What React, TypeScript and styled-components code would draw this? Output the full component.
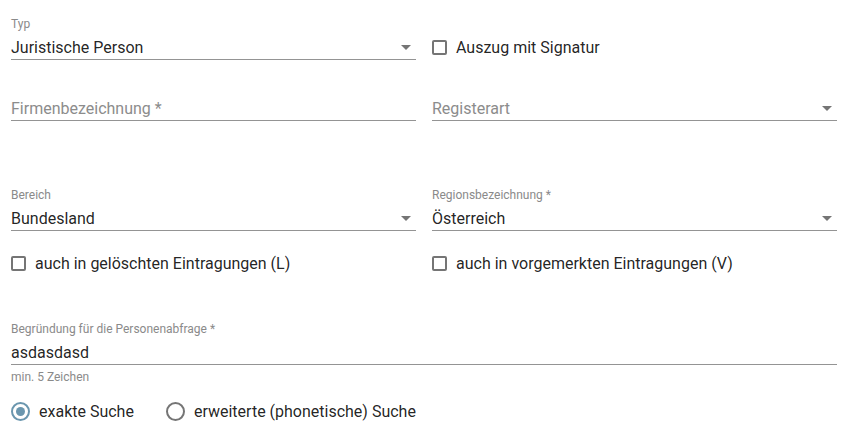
import React from "react";
import styled, { createGlobalStyle } from "styled-components";

const Global = createGlobalStyle`
  html, body { margin: 0; padding: 0; background: #fff; }
  body { font-family: Roboto, "Liberation Sans", Arial, sans-serif; color: rgba(0,0,0,0.87); }
  * { box-sizing: border-box; }
`;

const Form = styled.div`
  width: 826px;
  margin-left: 11px;
  padding-top: 16.5px;
  display: flex;
  flex-direction: column;
`;

const Row = styled.div<{ $mt?: number }>`
  display: grid;
  grid-template-columns: 405px 405px;
  column-gap: 16px;
  align-items: center;
  margin-top: ${(p) => p.$mt ?? 0}px;
`;

const Field = styled.div`
  display: flex;
  flex-direction: column;
`;

const Label = styled.div`
  font-size: 12px;
  line-height: 15px;
  height: 15px;
  color: #8a8a8a;
  white-space: nowrap;
`;

const InputRow = styled.div`
  display: flex;
  align-items: center;
  justify-content: space-between;
  padding: 6px 5px 2px 0;
  border-bottom: 1px solid #949494;
`;

const Value = styled.span<{ $placeholder?: boolean }>`
  font-size: 16px;
  line-height: 19px;
  height: 19px;
  color: ${(p) => (p.$placeholder ? "#8c8c8c" : "rgba(0,0,0,0.87)")};
  white-space: nowrap;
`;

const Arrow = styled.span`
  width: 0;
  height: 0;
  border-left: 5px solid transparent;
  border-right: 5px solid transparent;
  border-top: 5px solid #757575;
`;

const CheckRow = styled.label<{ $bottom?: boolean }>`
  display: flex;
  align-items: center;
  gap: 9px;
  height: 24px;
  font-size: 16px;
  line-height: 19px;
  white-space: nowrap;
  align-self: ${(p) => (p.$bottom ? "end" : "center")};
`;

const Box = styled.span`
  width: 15px;
  height: 15px;
  border: 2px solid #757575;
  border-radius: 2px;
  flex: none;
`;

const Helper = styled.div`
  margin-top: 5px;
  font-size: 12px;
  line-height: 15px;
  color: #8a8a8a;
`;

const Radios = styled.div`
  display: flex;
  align-items: center;
  gap: 32px;
  margin-top: 14.5px;
  height: 24px;
`;

const RadioItem = styled.label`
  display: flex;
  align-items: center;
  gap: 9px;
  font-size: 16px;
  line-height: 19px;
  white-space: nowrap;
`;

const Circle = styled.span<{ $on?: boolean }>`
  width: 19px;
  height: 19px;
  border-radius: 50%;
  border: 2px solid ${(p) => (p.$on ? "#6a96ae" : "#757575")};
  display: flex;
  align-items: center;
  justify-content: center;
  flex: none;
  &::after {
    content: "";
    display: ${(p) => (p.$on ? "block" : "none")};
    width: 9px;
    height: 9px;
    border-radius: 50%;
    background: #6a96ae;
  }
`;

const Wide = styled(Field)<{ $mt?: number }>`
  margin-top: ${(p) => p.$mt ?? 0}px;
`;

function Select({ label, value, placeholder }: { label?: string; value: string; placeholder?: boolean }) {
  return (
    <Field>
      <Label>{label ?? ""}</Label>
      <InputRow>
        <Value $placeholder={placeholder}>{value}</Value>
        <Arrow />
      </InputRow>
    </Field>
  );
}

function Check({ text, bottom }: { text: string; bottom?: boolean }) {
  return (
    <CheckRow $bottom={bottom}>
      <Box />
      {text}
    </CheckRow>
  );
}

export default function App() {
  return (
    <>
      <Global />
      <Form>
        <Row>
          <Select label="Typ" value="Juristische Person" />
          <Check text="Auszug mit Signatur" bottom />
        </Row>
        <Row $mt={18}>
          <Field>
            <Label />
            <InputRow>
              <Value $placeholder>Firmenbezeichnung *</Value>
            </InputRow>
          </Field>
          <Select value="Registerart" placeholder />
        </Row>
        <Row $mt={67}>
          <Select label="Bereich" value="Bundesland" />
          <Select label="Regionsbezeichnung *" value="Österreich" />
        </Row>
        <Row $mt={20.5}>
          <Check text="auch in gelöschten Eintragungen (L)" />
          <Check text="auch in vorgemerkten Eintragungen (V)" />
        </Row>
        <Wide $mt={46.5}>
          <Label>Begründung für die Personenabfrage *</Label>
          <InputRow>
            <Value>asdasdasd</Value>
          </InputRow>
        </Wide>
        <Helper>min. 5 Zeichen</Helper>
        <Radios>
          <RadioItem>
            <Circle $on />
            exakte Suche
          </RadioItem>
          <RadioItem>
            <Circle />
            erweiterte (phonetische) Suche
          </RadioItem>
        </Radios>
      </Form>
    </>
  );
}
